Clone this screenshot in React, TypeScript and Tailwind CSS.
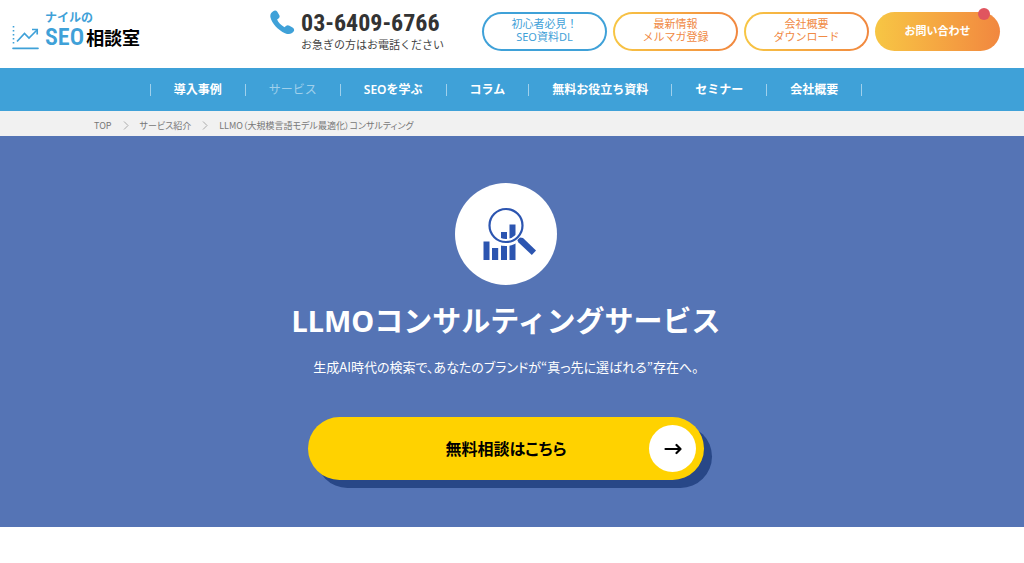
import { Fragment } from "react";

const navItems = [
  { label: "導入事例", active: false },
  { label: "サービス", active: true },
  { label: "SEOを学ぶ", active: false },
  { label: "コラム", active: false },
  { label: "無料お役立ち資料", active: false },
  { label: "セミナー", active: false },
  { label: "会社概要", active: false },
];

const crumbs = ["TOP", "サービス紹介", "LLMO（大規模言語モデル最適化）コンサルティング"];

const outlineButtons = [
  {
    lines: ["初心者必見！", "SEO資料DL"],
    frame: "bg-[#3fa1d8]",
    text: "text-[#3fa1d8]",
  },
  {
    lines: ["最新情報", "メルマガ登録"],
    frame: "bg-linear-to-r from-[#f7c644] to-[#f1873f]",
    text: "text-[#f08a45]",
  },
  {
    lines: ["会社概要", "ダウンロード"],
    frame: "bg-linear-to-r from-[#f7c644] to-[#f1873f]",
    text: "text-[#f08a45]",
  },
];

function Logo() {
  return (
    <a href="#" className="flex items-end gap-1.5 font-bold">
      <svg width="27" height="25" viewBox="0 0 27 25" fill="none" stroke="#3fa1d8">
        <path d="M1.500 1v20" strokeWidth="1.600" strokeDasharray="1.600 2.400" />
        <path d="M1 23.400h25" strokeWidth="1.600" strokeLinecap="round" />
        <path d="M5 16.500l7.500-8 4.500 4.500 8-8" strokeWidth="1.700" />
        <path d="M20 4.500h5.200v5" strokeWidth="1.700" />
      </svg>
      <span className="flex flex-col">
        <span className="text-[12px] leading-[14px] text-[#3fa1d8]">ナイルの</span>
        <span className="flex items-center gap-0.5 leading-[26px]">
          <span className="font-['Roboto_Condensed',Roboto,sans-serif] text-[24px] font-semibold text-[#3fa1d8]">
            SEO
          </span>
          <span className="text-[18px] text-black">相談室</span>
        </span>
      </span>
    </a>
  );
}

function Phone() {
  return (
    <a href="tel:03-6409-6766" className="flex items-start gap-1.5 text-[#333]">
      <svg width="25" height="25" viewBox="0 0 25 25" fill="#3fa1d8">
        <path d="M3.200 1.200C4.500.2 6.300.3 7.300 1.700l1.900 3.200c.8 1.400.5 2.600-.7 3.500l-1.400 1.100c1.200 3 3.900 5.800 7.400 7.700l1.400-1.200c1.100-1 2.300-1.100 3.600-.3l3.400 2.100c1.400.9 1.600 2.400.7 3.800-1.700 2.600-4.900 3.100-8.600 1.600C8.200 20.500 1.900 13.600.5 7.600-.1 4.800.8 2.700 3.200 1.200z" />
      </svg>
      <span className="flex flex-col">
        <span className="font-['Roboto_Condensed',Roboto,sans-serif] text-[24px] leading-[27px] font-bold">
          03-6409-6766
        </span>
        <span className="text-[11px] leading-[14px] text-[#444]">お急ぎの方はお電話ください</span>
      </span>
    </a>
  );
}

function Header() {
  return (
    <header className="flex h-[68px] items-start justify-between pr-6 pl-3">
      <div className="pt-2.5">
        <Logo />
      </div>
      <div className="flex gap-[38px]">
        <div className="pt-2.5">
          <Phone />
        </div>
        <div className="flex gap-1.5 pt-3 font-['Noto_Sans','Noto_Sans_CJK_JP',sans-serif]">
          {outlineButtons.map((button) => (
            <button
              key={button.lines[0]}
              className={`flex h-[39px] w-[125px] rounded-full p-0.5 ${button.frame}`}
            >
              <span
                className={`flex h-full w-full flex-col justify-center rounded-full bg-white pb-1 text-[11px] leading-[13px] ${button.text}`}
              >
                {button.lines.map((line) => (
                  <span key={line}>{line}</span>
                ))}
              </span>
            </button>
          ))}
          <button className="relative h-[39px] w-[125px] rounded-full bg-linear-to-r from-[#f7c644] to-[#f1873f] text-[11px] font-bold text-white">
            お問い合わせ
            <span className="absolute -top-1 right-2.5 h-3 w-3 rounded-full bg-[#e0555f]" />
          </button>
        </div>
      </div>
    </header>
  );
}

function Hero() {
  return (
    <section className="flex flex-col items-center bg-[#5574b5] pt-[47px] pr-3 pb-[47px] text-white">
      <div className="flex h-[102px] w-[102px] items-center justify-center rounded-full bg-white">
        <svg width="60" height="54" viewBox="-3 0 60 54" fill="#2c55b0">
          <path d="M4.500 34.500h6V53h-6zM13 41h6.200v12H13zM22 25h6v28h-6zM30.500 17.500h6V53h-6z" />
          <circle cx="27" cy="18.500" r="17" fill="none" stroke="#fff" strokeWidth="7" />
          <circle cx="27" cy="18.500" r="16.500" fill="none" stroke="#2c55b0" strokeWidth="2.200" />
          <path d="M38.300 33l2.700-2.600 3 .5 13 12.700-4.200 4.400L39.500 35.500z" />
        </svg>
      </div>
      <h1 className="mt-4 font-['Noto_Sans','Noto_Sans_CJK_JP',sans-serif] text-[29px] leading-10 font-bold">
        LLMOコンサルティングサービス
      </h1>
      <p className="mt-4 text-[13px] leading-5 [font-feature-settings:'palt']">
        生成AI時代の検索で、あなたのブランドが“真っ先に選ばれる”存在へ。
      </p>
      <button className="mt-10 flex h-[63px] w-[396px] items-center rounded-full bg-[#ffd200] pr-2 pl-[55px] text-black shadow-[8px_8px_0_#284787]">
        <span className="flex-1 pb-0.5 text-base font-bold [font-feature-settings:'palt']">
          無料相談はこちら
        </span>
        <span className="flex h-[47px] w-[47px] items-center justify-center rounded-full bg-white">
          <svg
            width="18"
            height="12"
            viewBox="0 0 18 12"
            fill="none"
            stroke="black"
            strokeWidth="2.200"
            strokeLinecap="round"
            strokeLinejoin="round"
          >
            <path d="M1.500 6h15M12.500 2l4 4-4 4" />
          </svg>
        </span>
      </button>
    </section>
  );
}

export default function App() {
  return (
    <div className="min-h-screen bg-white font-['Noto_Sans_CJK_JP',sans-serif]">
      <Header />

      <nav className="flex h-[43px] items-center justify-center bg-[#3fa1d8] pr-3">
        <span className="h-3 w-px bg-white/50" />
        {navItems.map((item) => (
          <Fragment key={item.label}>
            <a
              href="#"
              className={`px-[23px] font-['Noto_Sans','Noto_Sans_CJK_JP',sans-serif] text-[12px] leading-5 ${
                item.active ? "text-white/50" : "font-semibold text-white"
              }`}
            >
              {item.label}
            </a>
            <span className="h-3 w-px bg-white/50" />
          </Fragment>
        ))}
      </nav>

      <div className="bg-[#f1f1f1]">
        <ol className="mx-auto flex h-[25px] max-w-[836px] items-center gap-[11px] pt-1 text-[9px] text-[#777] [font-feature-settings:'palt']">
          {crumbs.map((crumb, index) => (
            <li key={crumb} className="flex items-center gap-[11px]">
              {index > 0 && (
                <svg width="6" height="9" viewBox="0 0 6 9" fill="none" stroke="#aaa">
                  <path d="M1 .5l4 4-4 4" />
                </svg>
              )}
              {index < crumbs.length - 1 ? <a href="#">{crumb}</a> : <span>{crumb}</span>}
            </li>
          ))}
        </ol>
      </div>

      <Hero />
    </div>
  );
}
